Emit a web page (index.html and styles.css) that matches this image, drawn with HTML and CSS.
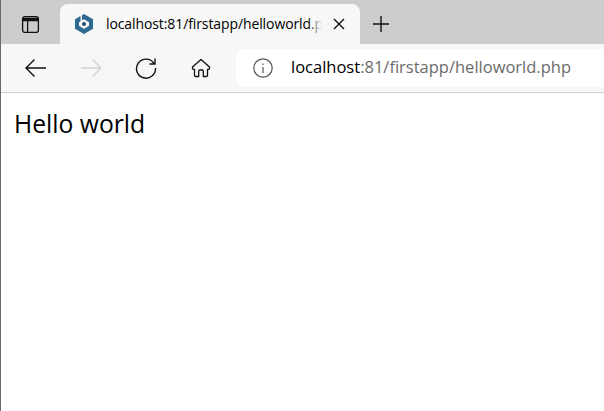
FILE: index.html
```html
<!DOCTYPE html>
<html lang="en">
<head>
<meta charset="utf-8">
<title>Hello world</title>
<link rel="stylesheet" href="styles.css">
</head>
<body>
<div class="window">
  <div class="tabstrip">
    <div class="tabs-btn">
      <svg width="20" height="20" viewBox="0 0 20 20" fill="none" stroke="#111" stroke-width="1.3"><rect x="2.6" y="2.6" width="15.8" height="15.8" rx="2.5"/><path d="M2.6 4.500h15.800M2.600 5.600h15.800M2.600 6.700h15.800M7.600 7v11"/></svg>
    </div>
    <div class="tab">
      <svg class="favicon" width="20" height="22" viewBox="0 0 20 22"><path fill="#2f6a94" d="M10 1l9 5.200v9.600L10 21l-9-5.200V6.200L6.500 3v5.400L5 9.200v3.600L10 16l5-3.200V9.200L10 6.200 8 7.300V2.200z"/><circle cx="10" cy="11" r="2" fill="#24506f"/></svg>
      <span class="tab-title">localhost:81/firstapp/helloworld.php</span>
      <span class="tab-fade"></span>
      <svg class="tab-close" width="14" height="14" viewBox="0 0 14 14" stroke="#111" stroke-width="1.4"><path d="M2 2l10 10M12 2L2 12"/></svg>
    </div>
    <div class="newtab">
      <svg width="20" height="20" viewBox="0 0 20 20" stroke="#111" stroke-width="1.4"><path d="M10 2v16M2 10h16"/></svg>
    </div>
  </div>
  <div class="toolbar">
    <div class="tool tool-back">
      <svg width="24" height="20" viewBox="0 0 24 20" fill="none" stroke="#111" stroke-width="1.4"><path d="M22 10H2M10.500 1.500L2 10l8.500 8.500"/></svg>
    </div>
    <div class="tool tool-fwd">
      <svg width="24" height="20" viewBox="0 0 24 20" fill="none" stroke="#d2d2d2" stroke-width="1.4"><path d="M2 10h20M13.500 1.500L22 10l-8.500 8.500"/></svg>
    </div>
    <div class="tool tool-reload">
      <svg width="22" height="22" viewBox="0 0 22 22" fill="none" stroke="#111" stroke-width="1.4"><path d="M19 6.500A9.500 9.500 0 1 0 20.500 11M20 1.500v5.500h-5.500"/></svg>
    </div>
    <div class="tool tool-home">
      <svg width="20" height="20" viewBox="0 0 20 20" fill="none" stroke="#111" stroke-width="1.3" stroke-linejoin="round"><path d="M10 1.500L1.500 9v1.500c0 .5.300.8.800.8H3.500v6c0 .7.500 1.200 1.200 1.200h3V13c0-.6.400-1 1-1h2.600c.6 0 1 .4 1 1v5.500h3c.7 0 1.200-.5 1.200-1.200v-6h1.200c.5 0 .8-.3.800-.8V9z"/></svg>
    </div>
    <div class="address">
      <svg class="info" width="20" height="20" viewBox="0 0 20 20" fill="none" stroke="#555" stroke-width="1.200"><circle cx="10" cy="10" r="9.200"/><path d="M10 9v6M10 5.500v1.500"/></svg>
      <span class="url"><span class="host">localhost</span>:81/firstapp/helloworld.php</span>
    </div>
  </div>
  <main class="content">
    <p class="hello">Hello world</p>
  </main>
</div>
</body>
</html>
```
FILE: styles.css
```css
html, body {
  margin: 0;
  padding: 0;
  height: 100%;
  overflow: hidden;
  background: #fff;
}
.window {
  display: flex;
  flex-direction: column;
  height: 411px;
  border-left: 1px solid #6a6a6a;
  box-sizing: border-box;
  font-family: "Open Sans", "Noto Sans", sans-serif;
  color: #000;
}
.tabstrip {
  display: flex;
  align-items: flex-end;
  height: 44px;
  background: #cdcdcd;
  flex: none;
}
.tabs-btn {
  width: 57px;
  height: 40px;
  display: flex;
  align-items: center;
  justify-content: center;
  flex: none;
  padding-right: 2px;
}
.tab {
  display: flex;
  align-items: center;
  width: 300px;
  height: 40px;
  box-sizing: border-box;
  padding: 0 14px;
  background: #f7f7f7;
  border-radius: 8px 8px 0 0;
  position: relative;
  flex: none;
}
.favicon { flex: none; }
.tab-title {
  margin-left: 12px;
  width: 216px;
  flex: none;
  overflow: hidden;
  white-space: nowrap;
  font-size: 14px;
  line-height: 20px;
  letter-spacing: -0.1px;
}
.tab-fade {
  position: absolute;
  left: 248px;
  top: 6px;
  width: 14px;
  height: 28px;
  background: linear-gradient(to right, rgba(247,247,247,0), #f7f7f7);
}
.tab-close {
  margin-left: 10px;
  flex: none;
}
.newtab {
  width: 42px;
  height: 40px;
  display: flex;
  align-items: center;
  justify-content: center;
  flex: none;
}
.toolbar {
  display: flex;
  align-items: center;
  height: 49px;
  box-sizing: border-box;
  background: #f7f7f7;
  border-bottom: 1px solid #d0d0d0;
  flex: none;
}
.tool {
  display: flex;
  align-items: center;
  justify-content: center;
  flex: none;
}
.tool-back { width: 24px; margin-left: 23px; }
.tool-fwd { width: 24px; margin-left: 31px; }
.tool-reload { width: 22px; margin-left: 32px; }
.tool-home { width: 20px; margin-left: 34px; }
.address {
  display: flex;
  align-items: center;
  flex: 1;
  height: 38px;
  margin-left: 25px;
  background: #fff;
  border-radius: 8px 0 0 8px;
  padding-left: 17px;
}
.info { flex: none; }
.url {
  margin-left: 18px;
  font-size: 16.5px;
  line-height: 22px;
  white-space: nowrap;
  color: #6b6b6b;
  padding-bottom: 2px;
}
.host { color: #000; }
.content {
  flex: 1;
  padding: 16px 13px;
}
.hello {
  margin: 0;
  font-size: 24.7px;
  line-height: 30px;
}
```
